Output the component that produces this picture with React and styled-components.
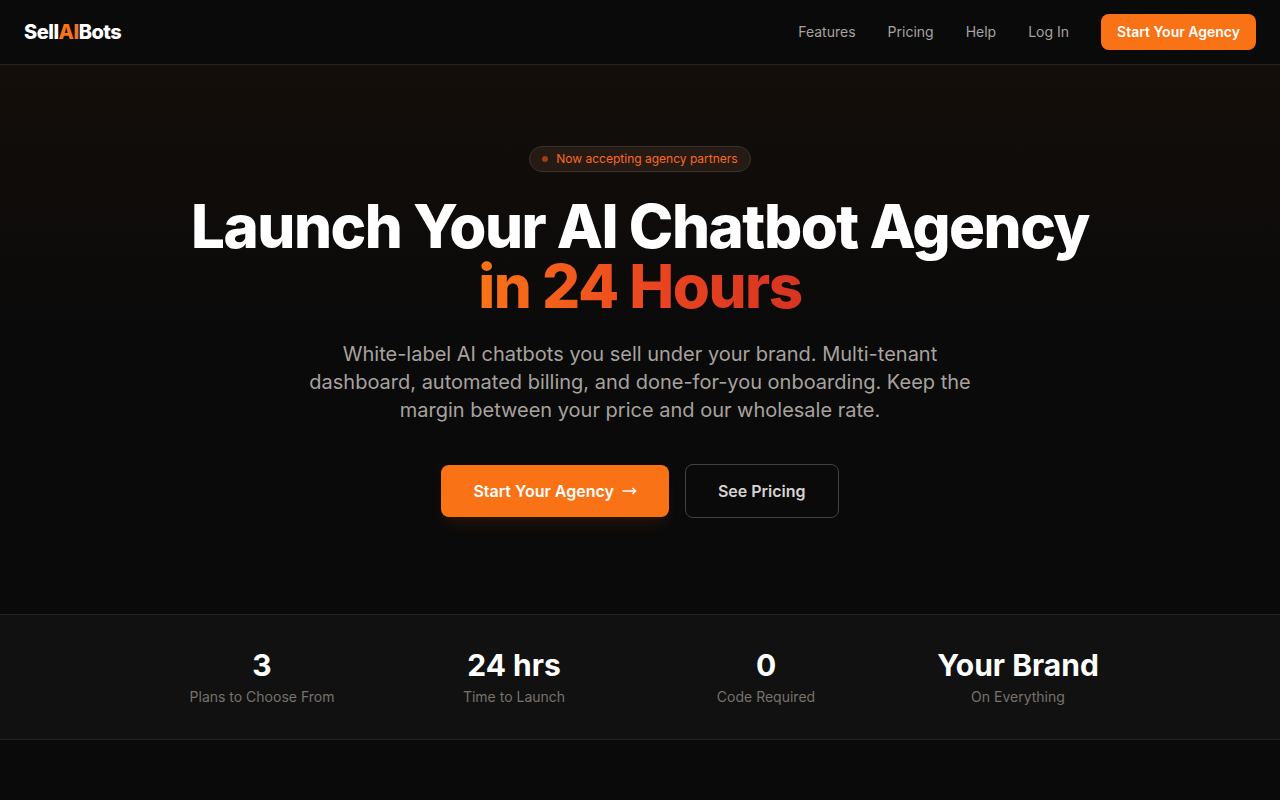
import React from 'react'
import styled, { createGlobalStyle } from 'styled-components'

const GlobalStyle = createGlobalStyle`
*{
box-sizing:border-box;
}
body{
margin:0;
background:#0a0a0a;
color:white;
font-family:Inter, sans-serif;
font-size:16px;
line-height:24px;
-webkit-font-smoothing:antialiased;
}
`
const Nav = styled.nav`
height:65px;
border-bottom:1px solid #2a211d;
`
const NavInner = styled.div`
max-width:1280px;
height:100%;
margin:0 auto;
padding:0 24px;
display:flex;
align-items:center;
justify-content:space-between;
`
const Logo = styled.a`
font-size:20px;
line-height:28px;
font-weight:800;
letter-spacing:-0.025em;
color:white;
text-decoration:none;
`
const Orange = styled.span`
color:#f97316;
`
const NavLinks = styled.div`
display:flex;
align-items:center;
gap:32px;
`
const NavLink = styled.a`
font-size:14px;
line-height:20px;
color:#a8a29e;
text-decoration:none;
&:hover{
color:white;
}
`
const NavButton = styled.a`
padding:8px 16px;
border-radius:8px;
background:#f97316;
color:white;
font-size:14px;
line-height:20px;
font-weight:600;
text-decoration:none;
`
const Hero = styled.header`
padding:81px 24px 96px;
display:flex;
flex-direction:column;
align-items:center;
text-align:center;
background:linear-gradient(to bottom, #140e0a, #0a0a0a 50%);
`
const Badge = styled.div`
display:flex;
align-items:center;
gap:8px;
margin-bottom:24px;
padding:4px 12px;
border:1px solid #3a302b;
border-radius:999px;
background:#261a15;
color:#fb6a1c;
font-size:12px;
line-height:16px;
`
const Dot = styled.span`
width:6px;
height:6px;
border-radius:50%;
background:#a03c14;
`
const Title = styled.h1`
margin:0 0 24px;
font-size:60px;
line-height:60px;
font-weight:800;
letter-spacing:-0.025em;
`
const Gradient = styled.span`
background:linear-gradient(to right, #f97316, #ea4420 55%, #d63422);
background-clip:text;
-webkit-background-clip:text;
color:transparent;
`
const Lead = styled.p`
max-width:672px;
margin:0 0 40px;
font-size:20px;
line-height:28px;
color:#a8a29e;
`
const Actions = styled.div`
display:flex;
align-items:center;
gap:16px;
`
const Action = styled.a`
display:flex;
align-items:center;
gap:8px;
padding:14px 32px;
border-radius:8px;
border:${props => props.$primary ? 'none' : '1px solid #44403c'};
background:${props => props.$primary ? '#f97316' : 'transparent'};
color:${props => props.$primary ? 'white' : '#d6d3d1'};
box-shadow:${props => props.$primary ? '0 10px 15px -3px rgba(249,115,22,.1), 0 4px 6px -4px rgba(249,115,22,.1)' : 'none'};
font-weight:600;
text-decoration:none;
`
const Stats = styled.section`
border-top:1px solid #292019;
border-bottom:1px solid #292019;
background:#111111;
`
const StatGrid = styled.div`
max-width:1024px;
margin:0 auto;
padding:32px 24px;
display:grid;
grid-template-columns:repeat(4, 1fr);
gap:32px;
text-align:center;
`
const StatValue = styled.div`
font-size:30px;
line-height:36px;
font-weight:700;
`
const StatLabel = styled.div`
margin-top:4px;
font-size:14px;
line-height:20px;
color:#78716c;
`

const links = ['Features', 'Pricing', 'Help', 'Log In']
const stats = [
 { value: '3', label: 'Plans to Choose From' },
 { value: '24 hrs', label: 'Time to Launch' },
 { value: '0', label: 'Code Required' },
 { value: 'Your Brand', label: 'On Everything' }
]

const Arrow = () => (
 <svg width="15" height="12" viewBox="0 0 15 12" fill="none" stroke="currentColor" strokeWidth="1.6" aria-hidden="true">
   <path d="M0.5 6H13.5M10.5 3L13.5 6L10.5 9" />
 </svg>
)

export default function App() {
 return (
   <div>
     <GlobalStyle />
     <Nav>
       <NavInner>
         <Logo href="#">Sell<Orange>AI</Orange>Bots</Logo>
         <NavLinks>
           {links.map(link => <NavLink key={link} href="#">{link}</NavLink>)}
           <NavButton href="#">Start Your Agency</NavButton>
         </NavLinks>
       </NavInner>
     </Nav>
     <Hero>
       <Badge><Dot />Now accepting agency partners</Badge>
       <Title>Launch Your AI Chatbot Agency<br /><Gradient>in 24 Hours</Gradient></Title>
       <Lead>White-label AI chatbots you sell under your brand. Multi-tenant dashboard, automated billing, and done-for-you onboarding. Keep the margin between your price and our wholesale rate.</Lead>
       <Actions>
         <Action href="#" $primary>Start Your Agency<Arrow /></Action>
         <Action href="#">See Pricing</Action>
       </Actions>
     </Hero>
     <Stats>
       <StatGrid>
         {stats.map(stat => (
           <div key={stat.label}>
             <StatValue>{stat.value}</StatValue>
             <StatLabel>{stat.label}</StatLabel>
           </div>
         ))}
       </StatGrid>
     </Stats>
   </div>
 )
}
